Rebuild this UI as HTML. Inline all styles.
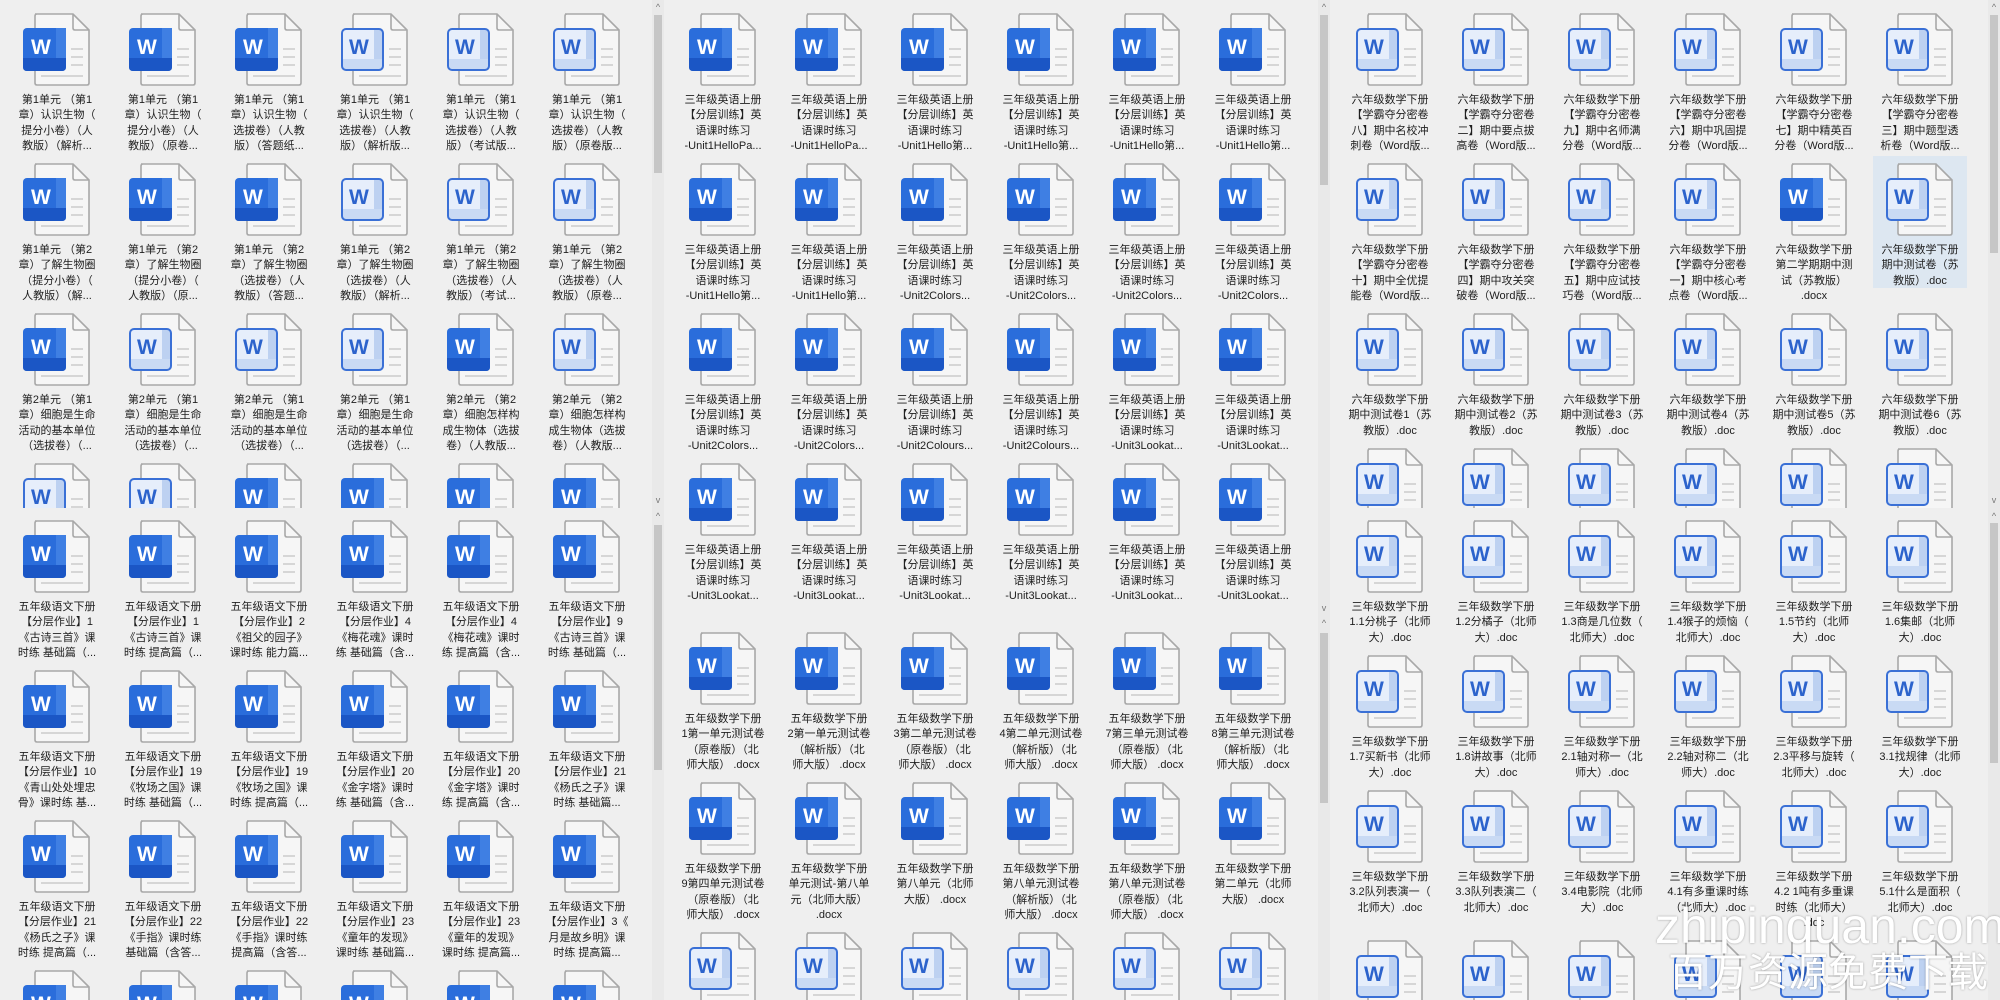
<!DOCTYPE html>
<html style="overflow:hidden;height:1000px;width:2000px"><head><meta charset="utf-8">
<style>
*{box-sizing:border-box}
html{overflow:hidden;height:1000px}
body{margin:0;width:2000px;height:1000px;background:#efefef;overflow:hidden;position:relative;font-family:"Liberation Sans","Noto Sans CJK SC",sans-serif}
.p{position:absolute;overflow:hidden;background:#efefef}
.i{position:absolute;width:100px;height:150px}
.i svg{position:absolute;left:16px;top:0;width:70px;height:75px}
.i p{position:absolute;top:80px;left:-6px;width:112px;margin:0;text-align:center;font-size:11px;line-height:15.3px;color:#1e1e1e;white-space:nowrap}
.sb{position:absolute;width:12px;background:#e9e9e9;overflow:hidden}
.th{position:absolute;left:2px;width:8px;background:#c6c6c6}
.ar{position:absolute;left:0;width:12px;text-align:center;font-size:9px;color:#777;line-height:10px}
.sel{position:absolute;background:#dde7f1}
.wm1{position:absolute;left:1655px;top:898px;font-size:50px;line-height:56px;color:#fff;font-family:"Liberation Sans",sans-serif;text-shadow:0 0 2px rgba(0,0,0,.35);white-space:nowrap}
.wm2{position:absolute;left:1668px;top:950px;font-size:40px;color:#fff;font-family:"Liberation Sans","Noto Sans CJK SC",sans-serif;text-shadow:0 0 2px rgba(0,0,0,.35);white-space:nowrap;line-height:46px}
</style></head><body>
<svg width="0" height="0" style="position:absolute;top:0;left:0"><defs>
<g id="doc">
<path d="M12 1H50L66 17V70Q66 72 64 72H14Q12 72 12 70V3Q12 1 14 1Z" fill="#f6f6f6" stroke="#a8a8a8" stroke-width="1.6"/>
<path d="M50 1V15Q50 17 52 17H66" fill="none" stroke="#a8a8a8" stroke-width="1.6"/>
<path d="M48 36H60M48 44H60M48 52H60M18 63H60" stroke="#d6d6d6" stroke-width="2"/>
</g>
<g id="d"><use href="#doc"/>
<rect x="0" y="15" width="43" height="43" rx="4" fill="#2a6ddb"/>
<rect x="33" y="15" width="10" height="30" fill="#3f7fe3"/>
<path d="M0 45H43V54Q43 58 39 58H4Q0 58 0 54Z" fill="#1b56c5"/>
<text x="8" y="41" font-family="Liberation Sans" font-weight="bold" font-size="21" fill="#fff">W</text></g>
<g id="l"><use href="#doc"/>
<rect x="1" y="16" width="41" height="41" rx="4" fill="#e6eefb"/>
<rect x="33" y="17" width="8" height="39" fill="#bdd1f1"/>
<path d="M2 46H41V53Q41 56 38 56H5Q2 56 2 53Z" fill="#c9daf4"/>
<rect x="1" y="16" width="41" height="41" rx="4" fill="none" stroke="#3a70d6" stroke-width="2"/>
<text x="8" y="41" font-family="Liberation Sans" font-weight="bold" font-size="21" fill="#2c63cc">W</text></g>
</defs></svg>

<!-- ===== Column 1 top ===== -->
<div class="p" style="left:0;top:0;width:652px;height:508px">
<div class="i" style="left:7px;top:13px"><svg><use href="#d"/></svg><p>第1单元 （第1<br>章）认识生物（<br>提分小卷）（人<br>教版）（解析...</p></div>
<div class="i" style="left:113px;top:13px"><svg><use href="#d"/></svg><p>第1单元 （第1<br>章）认识生物（<br>提分小卷）（人<br>教版）（原卷...</p></div>
<div class="i" style="left:219px;top:13px"><svg><use href="#d"/></svg><p>第1单元 （第1<br>章）认识生物（<br>选拔卷）（人教<br>版）（答题纸...</p></div>
<div class="i" style="left:325px;top:13px"><svg><use href="#l"/></svg><p>第1单元 （第1<br>章）认识生物（<br>选拔卷）（人教<br>版）（解析版...</p></div>
<div class="i" style="left:431px;top:13px"><svg><use href="#l"/></svg><p>第1单元 （第1<br>章）认识生物（<br>选拔卷）（人教<br>版）（考试版...</p></div>
<div class="i" style="left:537px;top:13px"><svg><use href="#l"/></svg><p>第1单元 （第1<br>章）认识生物（<br>选拔卷）（人教<br>版）（原卷版...</p></div>

<div class="i" style="left:7px;top:163px"><svg><use href="#d"/></svg><p>第1单元 （第2<br>章）了解生物圈<br>（提分小卷）（<br>人教版）（解...</p></div>
<div class="i" style="left:113px;top:163px"><svg><use href="#d"/></svg><p>第1单元 （第2<br>章）了解生物圈<br>（提分小卷）（<br>人教版）（原...</p></div>
<div class="i" style="left:219px;top:163px"><svg><use href="#d"/></svg><p>第1单元 （第2<br>章）了解生物圈<br>（选拔卷）（人<br>教版）（答题...</p></div>
<div class="i" style="left:325px;top:163px"><svg><use href="#l"/></svg><p>第1单元 （第2<br>章）了解生物圈<br>（选拔卷）（人<br>教版）（解析...</p></div>
<div class="i" style="left:431px;top:163px"><svg><use href="#l"/></svg><p>第1单元 （第2<br>章）了解生物圈<br>（选拔卷）（人<br>教版）（考试...</p></div>
<div class="i" style="left:537px;top:163px"><svg><use href="#l"/></svg><p>第1单元 （第2<br>章）了解生物圈<br>（选拔卷）（人<br>教版）（原卷...</p></div>

<div class="i" style="left:7px;top:313px"><svg><use href="#d"/></svg><p>第2单元 （第1<br>章）细胞是生命<br>活动的基本单位<br>（选拔卷）（...</p></div>
<div class="i" style="left:113px;top:313px"><svg><use href="#l"/></svg><p>第2单元 （第1<br>章）细胞是生命<br>活动的基本单位<br>（选拔卷）（...</p></div>
<div class="i" style="left:219px;top:313px"><svg><use href="#l"/></svg><p>第2单元 （第1<br>章）细胞是生命<br>活动的基本单位<br>（选拔卷）（...</p></div>
<div class="i" style="left:325px;top:313px"><svg><use href="#l"/></svg><p>第2单元 （第1<br>章）细胞是生命<br>活动的基本单位<br>（选拔卷）（...</p></div>
<div class="i" style="left:431px;top:313px"><svg><use href="#d"/></svg><p>第2单元 （第2<br>章）细胞怎样构<br>成生物体（选拔<br>卷）（人教版...</p></div>
<div class="i" style="left:537px;top:313px"><svg><use href="#l"/></svg><p>第2单元 （第2<br>章）细胞怎样构<br>成生物体（选拔<br>卷）（人教版...</p></div>

<div class="i" style="left:7px;top:463px"><svg><use href="#l"/></svg></div>
<div class="i" style="left:113px;top:463px"><svg><use href="#l"/></svg></div>
<div class="i" style="left:219px;top:463px"><svg><use href="#d"/></svg></div>
<div class="i" style="left:325px;top:463px"><svg><use href="#d"/></svg></div>
<div class="i" style="left:431px;top:463px"><svg><use href="#d"/></svg></div>
<div class="i" style="left:537px;top:463px"><svg><use href="#d"/></svg></div>
</div>

<!-- ===== Column 1 bottom ===== -->
<div class="p" style="left:0;top:508px;width:652px;height:492px">
<div class="i" style="left:7px;top:12px"><svg><use href="#d"/></svg><p>五年级语文下册<br>【分层作业】1<br>《古诗三首》课<br>时练 基础篇（...</p></div>
<div class="i" style="left:113px;top:12px"><svg><use href="#d"/></svg><p>五年级语文下册<br>【分层作业】1<br>《古诗三首》课<br>时练 提高篇（...</p></div>
<div class="i" style="left:219px;top:12px"><svg><use href="#d"/></svg><p>五年级语文下册<br>【分层作业】2<br>《祖父的园子》<br>课时练 能力篇...</p></div>
<div class="i" style="left:325px;top:12px"><svg><use href="#d"/></svg><p>五年级语文下册<br>【分层作业】4<br>《梅花魂》课时<br>练 基础篇（含...</p></div>
<div class="i" style="left:431px;top:12px"><svg><use href="#d"/></svg><p>五年级语文下册<br>【分层作业】4<br>《梅花魂》课时<br>练 提高篇（含...</p></div>
<div class="i" style="left:537px;top:12px"><svg><use href="#d"/></svg><p>五年级语文下册<br>【分层作业】9<br>《古诗三首》课<br>时练 基础篇（...</p></div>

<div class="i" style="left:7px;top:162px"><svg><use href="#d"/></svg><p>五年级语文下册<br>【分层作业】10<br>《青山处处埋忠<br>骨》课时练 基...</p></div>
<div class="i" style="left:113px;top:162px"><svg><use href="#d"/></svg><p>五年级语文下册<br>【分层作业】19<br>《牧场之国》课<br>时练 基础篇（...</p></div>
<div class="i" style="left:219px;top:162px"><svg><use href="#d"/></svg><p>五年级语文下册<br>【分层作业】19<br>《牧场之国》课<br>时练 提高篇（...</p></div>
<div class="i" style="left:325px;top:162px"><svg><use href="#d"/></svg><p>五年级语文下册<br>【分层作业】20<br>《金字塔》课时<br>练 基础篇（含...</p></div>
<div class="i" style="left:431px;top:162px"><svg><use href="#d"/></svg><p>五年级语文下册<br>【分层作业】20<br>《金字塔》课时<br>练 提高篇（含...</p></div>
<div class="i" style="left:537px;top:162px"><svg><use href="#d"/></svg><p>五年级语文下册<br>【分层作业】21<br>《杨氏之子》课<br>时练 基础篇...</p></div>

<div class="i" style="left:7px;top:312px"><svg><use href="#d"/></svg><p>五年级语文下册<br>【分层作业】21<br>《杨氏之子》课<br>时练 提高篇（...</p></div>
<div class="i" style="left:113px;top:312px"><svg><use href="#d"/></svg><p>五年级语文下册<br>【分层作业】22<br>《手指》课时练<br>基础篇（含答...</p></div>
<div class="i" style="left:219px;top:312px"><svg><use href="#d"/></svg><p>五年级语文下册<br>【分层作业】22<br>《手指》课时练<br>提高篇（含答...</p></div>
<div class="i" style="left:325px;top:312px"><svg><use href="#d"/></svg><p>五年级语文下册<br>【分层作业】23<br>《童年的发现》<br>课时练 基础篇...</p></div>
<div class="i" style="left:431px;top:312px"><svg><use href="#d"/></svg><p>五年级语文下册<br>【分层作业】23<br>《童年的发现》<br>课时练 提高篇...</p></div>
<div class="i" style="left:537px;top:312px"><svg><use href="#d"/></svg><p>五年级语文下册<br>【分层作业】3《<br>月是故乡明》课<br>时练 提高篇...</p></div>

<div class="i" style="left:7px;top:462px;height:30px;overflow:hidden"><svg><use href="#d"/></svg></div>
<div class="i" style="left:113px;top:462px;height:30px;overflow:hidden"><svg><use href="#d"/></svg></div>
<div class="i" style="left:219px;top:462px;height:30px;overflow:hidden"><svg><use href="#d"/></svg></div>
<div class="i" style="left:325px;top:462px;height:30px;overflow:hidden"><svg><use href="#d"/></svg></div>
<div class="i" style="left:431px;top:462px;height:30px;overflow:hidden"><svg><use href="#d"/></svg></div>
<div class="i" style="left:537px;top:462px;height:30px;overflow:hidden"><svg><use href="#d"/></svg></div>
</div>

<!-- ===== Column 2 top ===== -->
<div class="p" style="left:665px;top:0;width:653px;height:615px">
<div class="i" style="left:8px;top:13px"><svg><use href="#d"/></svg><p>三年级英语上册<br>【分层训练】英<br>语课时练习<br>-Unit1HelloPa...</p></div>
<div class="i" style="left:114px;top:13px"><svg><use href="#d"/></svg><p>三年级英语上册<br>【分层训练】英<br>语课时练习<br>-Unit1HelloPa...</p></div>
<div class="i" style="left:220px;top:13px"><svg><use href="#d"/></svg><p>三年级英语上册<br>【分层训练】英<br>语课时练习<br>-Unit1Hello第...</p></div>
<div class="i" style="left:326px;top:13px"><svg><use href="#d"/></svg><p>三年级英语上册<br>【分层训练】英<br>语课时练习<br>-Unit1Hello第...</p></div>
<div class="i" style="left:432px;top:13px"><svg><use href="#d"/></svg><p>三年级英语上册<br>【分层训练】英<br>语课时练习<br>-Unit1Hello第...</p></div>
<div class="i" style="left:538px;top:13px"><svg><use href="#d"/></svg><p>三年级英语上册<br>【分层训练】英<br>语课时练习<br>-Unit1Hello第...</p></div>

<div class="i" style="left:8px;top:163px"><svg><use href="#d"/></svg><p>三年级英语上册<br>【分层训练】英<br>语课时练习<br>-Unit1Hello第...</p></div>
<div class="i" style="left:114px;top:163px"><svg><use href="#d"/></svg><p>三年级英语上册<br>【分层训练】英<br>语课时练习<br>-Unit1Hello第...</p></div>
<div class="i" style="left:220px;top:163px"><svg><use href="#d"/></svg><p>三年级英语上册<br>【分层训练】英<br>语课时练习<br>-Unit2Colors...</p></div>
<div class="i" style="left:326px;top:163px"><svg><use href="#d"/></svg><p>三年级英语上册<br>【分层训练】英<br>语课时练习<br>-Unit2Colors...</p></div>
<div class="i" style="left:432px;top:163px"><svg><use href="#d"/></svg><p>三年级英语上册<br>【分层训练】英<br>语课时练习<br>-Unit2Colors...</p></div>
<div class="i" style="left:538px;top:163px"><svg><use href="#d"/></svg><p>三年级英语上册<br>【分层训练】英<br>语课时练习<br>-Unit2Colors...</p></div>

<div class="i" style="left:8px;top:313px"><svg><use href="#d"/></svg><p>三年级英语上册<br>【分层训练】英<br>语课时练习<br>-Unit2Colors...</p></div>
<div class="i" style="left:114px;top:313px"><svg><use href="#d"/></svg><p>三年级英语上册<br>【分层训练】英<br>语课时练习<br>-Unit2Colors...</p></div>
<div class="i" style="left:220px;top:313px"><svg><use href="#d"/></svg><p>三年级英语上册<br>【分层训练】英<br>语课时练习<br>-Unit2Colours...</p></div>
<div class="i" style="left:326px;top:313px"><svg><use href="#d"/></svg><p>三年级英语上册<br>【分层训练】英<br>语课时练习<br>-Unit2Colours...</p></div>
<div class="i" style="left:432px;top:313px"><svg><use href="#d"/></svg><p>三年级英语上册<br>【分层训练】英<br>语课时练习<br>-Unit3Lookat...</p></div>
<div class="i" style="left:538px;top:313px"><svg><use href="#d"/></svg><p>三年级英语上册<br>【分层训练】英<br>语课时练习<br>-Unit3Lookat...</p></div>

<div class="i" style="left:8px;top:463px"><svg><use href="#d"/></svg><p>三年级英语上册<br>【分层训练】英<br>语课时练习<br>-Unit3Lookat...</p></div>
<div class="i" style="left:114px;top:463px"><svg><use href="#d"/></svg><p>三年级英语上册<br>【分层训练】英<br>语课时练习<br>-Unit3Lookat...</p></div>
<div class="i" style="left:220px;top:463px"><svg><use href="#d"/></svg><p>三年级英语上册<br>【分层训练】英<br>语课时练习<br>-Unit3Lookat...</p></div>
<div class="i" style="left:326px;top:463px"><svg><use href="#d"/></svg><p>三年级英语上册<br>【分层训练】英<br>语课时练习<br>-Unit3Lookat...</p></div>
<div class="i" style="left:432px;top:463px"><svg><use href="#d"/></svg><p>三年级英语上册<br>【分层训练】英<br>语课时练习<br>-Unit3Lookat...</p></div>
<div class="i" style="left:538px;top:463px"><svg><use href="#d"/></svg><p>三年级英语上册<br>【分层训练】英<br>语课时练习<br>-Unit3Lookat...</p></div>
</div>

<!-- ===== Column 2 bottom ===== -->
<div class="p" style="left:665px;top:615px;width:653px;height:385px">
<div class="i" style="left:8px;top:17px"><svg><use href="#d"/></svg><p>五年级数学下册<br>1第一单元测试卷<br>（原卷版）（北<br>师大版） .docx</p></div>
<div class="i" style="left:114px;top:17px"><svg><use href="#d"/></svg><p>五年级数学下册<br>2第一单元测试卷<br>（解析版）（北<br>师大版） .docx</p></div>
<div class="i" style="left:220px;top:17px"><svg><use href="#d"/></svg><p>五年级数学下册<br>3第二单元测试卷<br>（原卷版）（北<br>师大版） .docx</p></div>
<div class="i" style="left:326px;top:17px"><svg><use href="#d"/></svg><p>五年级数学下册<br>4第二单元测试卷<br>（解析版）（北<br>师大版） .docx</p></div>
<div class="i" style="left:432px;top:17px"><svg><use href="#d"/></svg><p>五年级数学下册<br>7第三单元测试卷<br>（原卷版）（北<br>师大版） .docx</p></div>
<div class="i" style="left:538px;top:17px"><svg><use href="#d"/></svg><p>五年级数学下册<br>8第三单元测试卷<br>（解析版）（北<br>师大版） .docx</p></div>

<div class="i" style="left:8px;top:167px"><svg><use href="#d"/></svg><p>五年级数学下册<br>9第四单元测试卷<br>（原卷版）（北<br>师大版） .docx</p></div>
<div class="i" style="left:114px;top:167px"><svg><use href="#d"/></svg><p>五年级数学下册<br>单元测试-第八单<br>元（北师大版）<br>.docx</p></div>
<div class="i" style="left:220px;top:167px"><svg><use href="#d"/></svg><p>五年级数学下册<br>第八单元（北师<br>大版） .docx</p></div>
<div class="i" style="left:326px;top:167px"><svg><use href="#d"/></svg><p>五年级数学下册<br>第八单元测试卷<br>（解析版）（北<br>师大版） .docx</p></div>
<div class="i" style="left:432px;top:167px"><svg><use href="#d"/></svg><p>五年级数学下册<br>第八单元测试卷<br>（原卷版）（北<br>师大版） .docx</p></div>
<div class="i" style="left:538px;top:167px"><svg><use href="#d"/></svg><p>五年级数学下册<br>第二单元（北师<br>大版） .docx</p></div>

<div class="i" style="left:8px;top:317px;height:68px;overflow:hidden"><svg><use href="#l"/></svg></div>
<div class="i" style="left:114px;top:317px;height:68px;overflow:hidden"><svg><use href="#l"/></svg></div>
<div class="i" style="left:220px;top:317px;height:68px;overflow:hidden"><svg><use href="#l"/></svg></div>
<div class="i" style="left:326px;top:317px;height:68px;overflow:hidden"><svg><use href="#l"/></svg></div>
<div class="i" style="left:432px;top:317px;height:68px;overflow:hidden"><svg><use href="#l"/></svg></div>
<div class="i" style="left:538px;top:317px;height:68px;overflow:hidden"><svg><use href="#l"/></svg></div>
</div>

<!-- ===== Column 3 top ===== -->
<div class="p" style="left:1330px;top:0;width:658px;height:508px">
<div class="sel" style="left:543px;top:156px;width:94px;height:132px"></div>
<div class="i" style="left:10px;top:13px"><svg><use href="#l"/></svg><p>六年级数学下册<br>【学霸夺分密卷<br>八】期中名校冲<br>刺卷（Word版...</p></div>
<div class="i" style="left:116px;top:13px"><svg><use href="#l"/></svg><p>六年级数学下册<br>【学霸夺分密卷<br>二】期中要点拔<br>高卷（Word版...</p></div>
<div class="i" style="left:222px;top:13px"><svg><use href="#l"/></svg><p>六年级数学下册<br>【学霸夺分密卷<br>九】期中名师满<br>分卷（Word版...</p></div>
<div class="i" style="left:328px;top:13px"><svg><use href="#l"/></svg><p>六年级数学下册<br>【学霸夺分密卷<br>六】期中巩固提<br>分卷（Word版...</p></div>
<div class="i" style="left:434px;top:13px"><svg><use href="#l"/></svg><p>六年级数学下册<br>【学霸夺分密卷<br>七】期中精英百<br>分卷（Word版...</p></div>
<div class="i" style="left:540px;top:13px"><svg><use href="#l"/></svg><p>六年级数学下册<br>【学霸夺分密卷<br>三】期中题型透<br>析卷（Word版...</p></div>

<div class="i" style="left:10px;top:163px"><svg><use href="#l"/></svg><p>六年级数学下册<br>【学霸夺分密卷<br>十】期中全优提<br>能卷（Word版...</p></div>
<div class="i" style="left:116px;top:163px"><svg><use href="#l"/></svg><p>六年级数学下册<br>【学霸夺分密卷<br>四】期中攻关突<br>破卷（Word版...</p></div>
<div class="i" style="left:222px;top:163px"><svg><use href="#l"/></svg><p>六年级数学下册<br>【学霸夺分密卷<br>五】期中应试技<br>巧卷（Word版...</p></div>
<div class="i" style="left:328px;top:163px"><svg><use href="#l"/></svg><p>六年级数学下册<br>【学霸夺分密卷<br>一】期中核心考<br>点卷（Word版...</p></div>
<div class="i" style="left:434px;top:163px"><svg><use href="#d"/></svg><p>六年级数学下册<br>第二学期期中测<br>试（苏教版）<br>.docx</p></div>
<div class="i" style="left:540px;top:163px"><svg><use href="#l"/></svg><p>六年级数学下册<br>期中测试卷（苏<br>教版）.doc</p></div>

<div class="i" style="left:10px;top:313px"><svg><use href="#l"/></svg><p>六年级数学下册<br>期中测试卷1（苏<br>教版）.doc</p></div>
<div class="i" style="left:116px;top:313px"><svg><use href="#l"/></svg><p>六年级数学下册<br>期中测试卷2（苏<br>教版）.doc</p></div>
<div class="i" style="left:222px;top:313px"><svg><use href="#l"/></svg><p>六年级数学下册<br>期中测试卷3（苏<br>教版）.doc</p></div>
<div class="i" style="left:328px;top:313px"><svg><use href="#l"/></svg><p>六年级数学下册<br>期中测试卷4（苏<br>教版）.doc</p></div>
<div class="i" style="left:434px;top:313px"><svg><use href="#l"/></svg><p>六年级数学下册<br>期中测试卷5（苏<br>教版）.doc</p></div>
<div class="i" style="left:540px;top:313px"><svg><use href="#l"/></svg><p>六年级数学下册<br>期中测试卷6（苏<br>教版）.doc</p></div>

<div class="i" style="left:10px;top:448px;height:60px;overflow:hidden"><svg><use href="#l"/></svg></div>
<div class="i" style="left:116px;top:448px;height:60px;overflow:hidden"><svg><use href="#l"/></svg></div>
<div class="i" style="left:222px;top:448px;height:60px;overflow:hidden"><svg><use href="#l"/></svg></div>
<div class="i" style="left:328px;top:448px;height:60px;overflow:hidden"><svg><use href="#l"/></svg></div>
<div class="i" style="left:434px;top:448px;height:60px;overflow:hidden"><svg><use href="#l"/></svg></div>
<div class="i" style="left:540px;top:448px;height:60px;overflow:hidden"><svg><use href="#l"/></svg></div>
</div>

<!-- ===== Column 3 bottom ===== -->
<div class="p" style="left:1330px;top:508px;width:658px;height:492px">
<div class="i" style="left:10px;top:12px"><svg><use href="#l"/></svg><p>三年级数学下册<br>1.1分桃子（北师<br>大）.doc</p></div>
<div class="i" style="left:116px;top:12px"><svg><use href="#l"/></svg><p>三年级数学下册<br>1.2分橘子（北师<br>大）.doc</p></div>
<div class="i" style="left:222px;top:12px"><svg><use href="#l"/></svg><p>三年级数学下册<br>1.3商是几位数（<br>北师大）.doc</p></div>
<div class="i" style="left:328px;top:12px"><svg><use href="#l"/></svg><p>三年级数学下册<br>1.4猴子的烦恼（<br>北师大）.doc</p></div>
<div class="i" style="left:434px;top:12px"><svg><use href="#l"/></svg><p>三年级数学下册<br>1.5节约（北师<br>大）.doc</p></div>
<div class="i" style="left:540px;top:12px"><svg><use href="#l"/></svg><p>三年级数学下册<br>1.6集邮（北师<br>大）.doc</p></div>

<div class="i" style="left:10px;top:147px"><svg><use href="#l"/></svg><p>三年级数学下册<br>1.7买新书（北师<br>大）.doc</p></div>
<div class="i" style="left:116px;top:147px"><svg><use href="#l"/></svg><p>三年级数学下册<br>1.8讲故事（北师<br>大）.doc</p></div>
<div class="i" style="left:222px;top:147px"><svg><use href="#l"/></svg><p>三年级数学下册<br>2.1轴对称一（北<br>师大）.doc</p></div>
<div class="i" style="left:328px;top:147px"><svg><use href="#l"/></svg><p>三年级数学下册<br>2.2轴对称二（北<br>师大）.doc</p></div>
<div class="i" style="left:434px;top:147px"><svg><use href="#l"/></svg><p>三年级数学下册<br>2.3平移与旋转（<br>北师大）.doc</p></div>
<div class="i" style="left:540px;top:147px"><svg><use href="#l"/></svg><p>三年级数学下册<br>3.1找规律（北师<br>大）.doc</p></div>

<div class="i" style="left:10px;top:282px"><svg><use href="#l"/></svg><p>三年级数学下册<br>3.2队列表演一（<br>北师大）.doc</p></div>
<div class="i" style="left:116px;top:282px"><svg><use href="#l"/></svg><p>三年级数学下册<br>3.3队列表演二（<br>北师大）.doc</p></div>
<div class="i" style="left:222px;top:282px"><svg><use href="#l"/></svg><p>三年级数学下册<br>3.4电影院（北师<br>大）.doc</p></div>
<div class="i" style="left:328px;top:282px"><svg><use href="#l"/></svg><p>三年级数学下册<br>4.1有多重课时练<br>（北师大）.doc</p></div>
<div class="i" style="left:434px;top:282px"><svg><use href="#l"/></svg><p>三年级数学下册<br>4.2 1吨有多重课<br>时练（北师大）<br>.doc</p></div>
<div class="i" style="left:540px;top:282px"><svg><use href="#l"/></svg><p>三年级数学下册<br>5.1什么是面积（<br>北师大）.doc</p></div>

<div class="i" style="left:10px;top:432px;height:60px;overflow:hidden"><svg><use href="#l"/></svg></div>
<div class="i" style="left:116px;top:432px;height:60px;overflow:hidden"><svg><use href="#l"/></svg></div>
<div class="i" style="left:222px;top:432px;height:60px;overflow:hidden"><svg><use href="#l"/></svg></div>
<div class="i" style="left:328px;top:432px;height:60px;overflow:hidden"><svg><use href="#l"/></svg></div>
<div class="i" style="left:434px;top:432px;height:60px;overflow:hidden"><svg><use href="#l"/></svg></div>
<div class="i" style="left:540px;top:432px;height:60px;overflow:hidden"><svg><use href="#l"/></svg></div>
</div>

<!-- ===== Scrollbars ===== -->
<div class="sb" style="left:652px;top:0;height:508px"><div class="ar" style="top:2px">^</div><div class="th" style="top:15px;height:158px"></div><div class="ar" style="top:495px">v</div></div>
<div class="sb" style="left:652px;top:508px;height:492px"><div class="ar" style="top:3px">^</div><div class="th" style="top:17px;height:245px"></div></div>
<div class="sb" style="left:1318px;top:0;height:615px"><div class="ar" style="top:2px">^</div><div class="th" style="top:15px;height:170px"></div><div class="ar" style="top:603px">v</div></div>
<div class="sb" style="left:1318px;top:615px;height:385px"><div class="ar" style="top:3px">^</div><div class="th" style="top:18px;height:170px"></div></div>
<div class="sb" style="left:1988px;top:0;height:508px"><div class="ar" style="top:2px">^</div><div class="th" style="top:15px;height:238px"></div><div class="ar" style="top:495px">v</div></div>
<div class="sb" style="left:1988px;top:508px;height:492px"><div class="ar" style="top:3px">^</div><div class="th" style="top:15px;height:240px"></div></div>

<div class="wm1">zhipinquan.com</div>
<div class="wm2">百万资源免费下载</div>
</body></html>
